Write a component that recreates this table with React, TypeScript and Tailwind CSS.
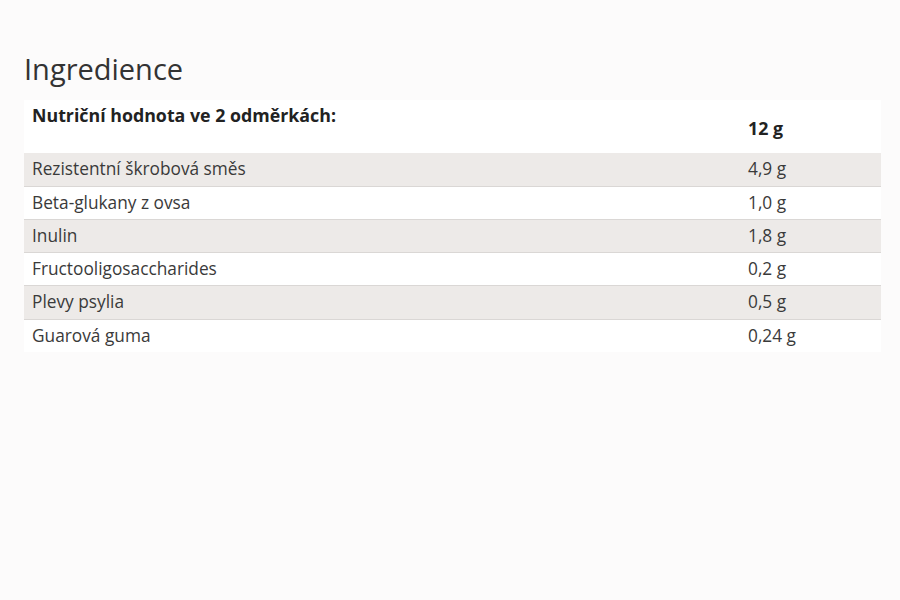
import React from "react";

const rows: [string, string][] = [
  ["Rezistentní škrobová směs", "4,9 g"],
  ["Beta-glukany z ovsa", "1,0 g"],
  ["Inulin", "1,8 g"],
  ["Fructooligosaccharides", "0,2 g"],
  ["Plevy psylia", "0,5 g"],
  ["Guarová guma", "0,24 g"],
];

export default function App() {
  return (
    <div
      className="w-[900px] h-[600px] bg-[#fcfbfb] text-[#333333] pt-[52px] px-[24px]"
      style={{ fontFamily: '"Open Sans", sans-serif' }}
    >
      <h2 className="text-[29px] leading-[34px] font-normal text-[#333333]">Ingredience</h2>
      <table className="mt-[14px] w-[857px] bg-white border-collapse text-[17.3px] leading-[24.3px]">
        <tbody>
          <tr>
            <td className="align-top px-[8px] pt-[3px] pb-[26px] font-bold text-[17.8px] text-[#222222]">
              Nutriční hodnota ve 2 odměrkách:
            </td>
            <td className="align-middle px-[8px] pt-[3px] w-[141px] font-bold text-[17.8px] text-[#222222]">12 g</td>
          </tr>
          {rows.map(([n, v], i) => (
            <tr
              key={n}
              className={(i % 2 === 0 ? "bg-[#edeae8]" : "bg-white") + (i < rows.length - 1 ? " border-b border-[#dad7d5]" : "")}
            >
              <td className="px-[8px] py-[4px] text-[#3a3a3a]">{n}</td>
              <td className="px-[8px] py-[4px] text-[#3a3a3a]">{v}</td>
            </tr>
          ))}
        </tbody>
      </table>
    </div>
  );
}
